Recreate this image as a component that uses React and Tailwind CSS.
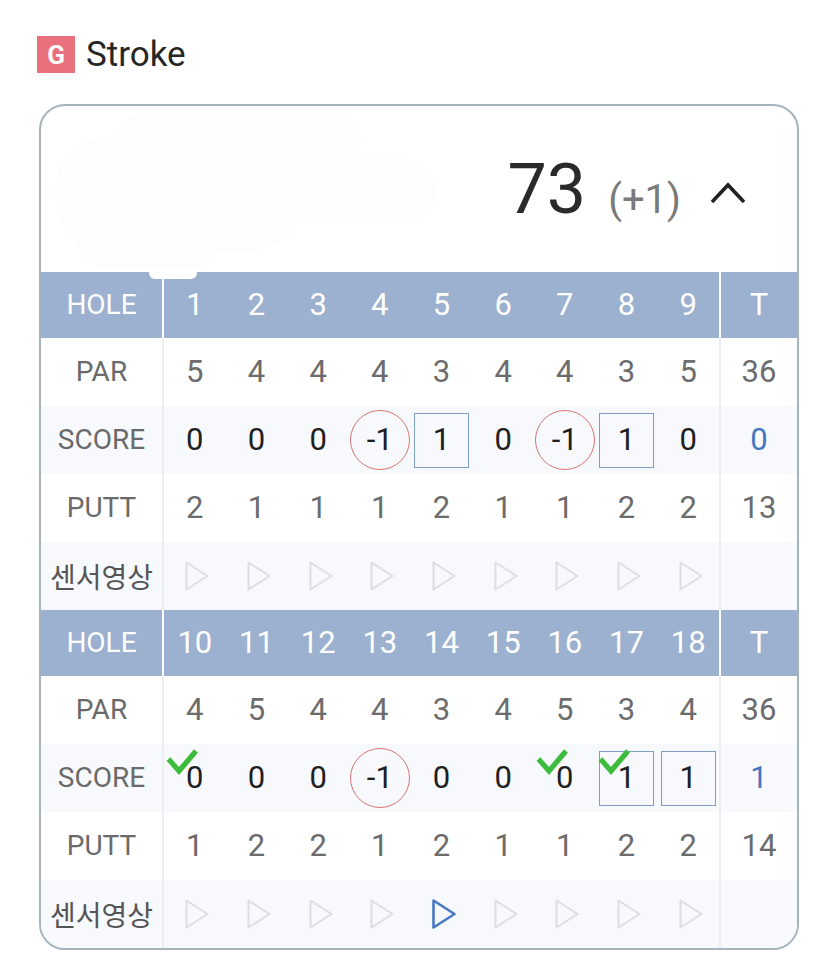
import React from "react";

const front = {
  holes: [1, 2, 3, 4, 5, 6, 7, 8, 9],
  par: [5, 4, 4, 4, 3, 4, 4, 3, 5],
  parT: 36,
  score: [0, 0, 0, -1, 1, 0, -1, 1, 0],
  scoreT: 0,
  checks: [],
  putt: [2, 1, 1, 1, 2, 1, 1, 2, 2],
  puttT: 13,
  active: -1,
};
const back = {
  holes: [10, 11, 12, 13, 14, 15, 16, 17, 18],
  par: [4, 5, 4, 4, 3, 4, 5, 3, 4],
  parT: 36,
  score: [0, 0, 0, -1, 0, 0, 0, 1, 1],
  scoreT: 1,
  checks: [0, 6, 7],
  putt: [1, 2, 2, 1, 2, 1, 1, 2, 2],
  puttT: 14,
  active: 4,
};

const GRID = "grid grid-cols-[123px_repeat(9,minmax(0,1fr))_78px]";

function Check() {
  return (
    <svg className="absolute left-[1px] top-[3px]" width="34" height="30" viewBox="0 0 34 30">
      <path d="M3.5 12 L14 24 L31 4" fill="none" stroke="#3dbb3d" strokeWidth="5.2" />
    </svg>
  );
}

function Play({ active }) {
  return (
    <svg className="ml-[5px]" width="26" height="32" viewBox="0 0 26 32">
      <path
        d="M2.5 2.5 L23.5 16 L2.5 29.5 Z"
        fill="none"
        stroke={active ? "#4a79c3" : "#dcdee2"}
        strokeWidth={active ? 2.6 : 2}
        strokeLinejoin="round"
      />
    </svg>
  );
}

function ScoreValue({ v }) {
  if (v < 0)
    return (
      <div className="w-[60px] h-[60px] rounded-full border-[1.5px] border-[#da7272] flex items-center justify-center text-[31px] text-[#1f1f1f]">
        {v}
      </div>
    );
  if (v > 0)
    return (
      <div className="w-[55px] h-[55px] border-[1.5px] border-[#7f9ec6] flex items-center justify-center text-[31px] text-[#1f1f1f]">
        {v}
      </div>
    );
  return <span className="relative text-[31px] text-[#1f1f1f]">{v}</span>;
}

function Half({ d }) {
  const label = "flex items-center justify-center text-[28px] text-[#6a6a6a] border-r-2 border-[#eceef2]";
  const tot = "flex items-center justify-center border-l-2 border-[#eceef2]";
  return (
    <>
      <div className={`${GRID} h-[66px] bg-[#9cb0cf] text-white`}>
        <div className="flex items-center justify-center text-[28px] border-r-2 border-white">HOLE</div>
        {d.holes.map((h) => (
          <div key={h} className="flex items-center justify-center text-[31px]">
            {h}
          </div>
        ))}
        <div className="flex items-center justify-center text-[31px] border-l-2 border-white">T</div>
      </div>
      <div className={`${GRID} h-[68px] bg-white`}>
        <div className={label}>PAR</div>
        {d.par.map((p, i) => (
          <div key={i} className="flex items-center justify-center text-[31px] text-[#6c6c6c]">
            {p}
          </div>
        ))}
        <div className={`${tot} text-[31px] text-[#6c6c6c]`}>{d.parT}</div>
      </div>
      <div className={`${GRID} h-[68px] bg-[#f7f9fc]`}>
        <div className={label}>SCORE</div>
        {d.score.map((s, i) => (
          <div key={i} className="relative flex items-center justify-center">
            {d.checks.includes(i) && <Check />}
            <ScoreValue v={s} />
          </div>
        ))}
        <div className={`${tot} text-[31px] text-[#4378be]`}>{d.scoreT}</div>
      </div>
      <div className={`${GRID} h-[68px] bg-white`}>
        <div className={label}>PUTT</div>
        {d.putt.map((p, i) => (
          <div key={i} className="flex items-center justify-center text-[31px] text-[#6c6c6c]">
            {p}
          </div>
        ))}
        <div className={`${tot} text-[31px] text-[#6c6c6c]`}>{d.puttT}</div>
      </div>
      <div className={`${GRID} h-[68px] bg-[#f7f9fc]`}>
        <div className={`${label} text-[26px] text-[#555] font-['Noto_Sans_CJK_KR',sans-serif]`}>센서영상</div>
        {d.holes.map((h, i) => (
          <div key={h} className="flex items-center justify-center">
            <Play active={i === d.active} />
          </div>
        ))}
        <div className={tot}></div>
      </div>
    </>
  );
}

export default function App() {
  return (
    <div className="w-[838px] h-[978px] bg-white font-['Roboto',sans-serif] overflow-hidden">
      <div className="pl-[37px] pt-[36px] flex items-center gap-[11px]">
        <div className="w-[38px] h-[37px] bg-[#e9707d] flex items-center justify-center text-white font-bold text-[26px] leading-none">
          G
        </div>
        <div className="text-[35px] text-[#262626] leading-none">Stroke</div>
      </div>
      <div className="ml-[39px] mt-[31px] w-[760px] border-2 border-[#a5b3bd] rounded-[26px] overflow-hidden relative">
        <div className="relative h-[166px] flex items-center justify-end pr-[50px]">
          <div className="absolute left-[75px] top-[6px] w-[245px] h-[60px] rounded-full bg-[#fdfdfd]" />
          <div className="absolute left-[14px] top-[30px] w-[250px] h-[115px] rounded-[55px] bg-[#fdfdfd]" />
          <div className="absolute left-[35px] top-[100px] w-[145px] h-[62px] rounded-[40px] bg-[#fdfdfd]" />
          <div className="absolute left-[230px] top-[52px] w-[165px] h-[66px] rounded-[33px] bg-[#fdfdfd]" />
          <div className="relative flex items-baseline">
            <span className="text-[70px] text-[#2a2a2a] leading-none">73</span>
            <span className="ml-[22px] text-[40px] text-[#7a7a7a] leading-none">(+1)</span>
          </div>
          <svg className="relative ml-[28px] mt-[8px]" width="38" height="24" viewBox="0 0 38 24">
            <path d="M3 21 L19 4 L35 21" fill="none" stroke="#222" strokeWidth="3.6" />
          </svg>
        </div>
        <Half d={front} />
        <Half d={back} />
        <div className="absolute left-[108px] top-[161px] w-[48px] h-[12px] rounded-full bg-white" />
      </div>
    </div>
  );
}
